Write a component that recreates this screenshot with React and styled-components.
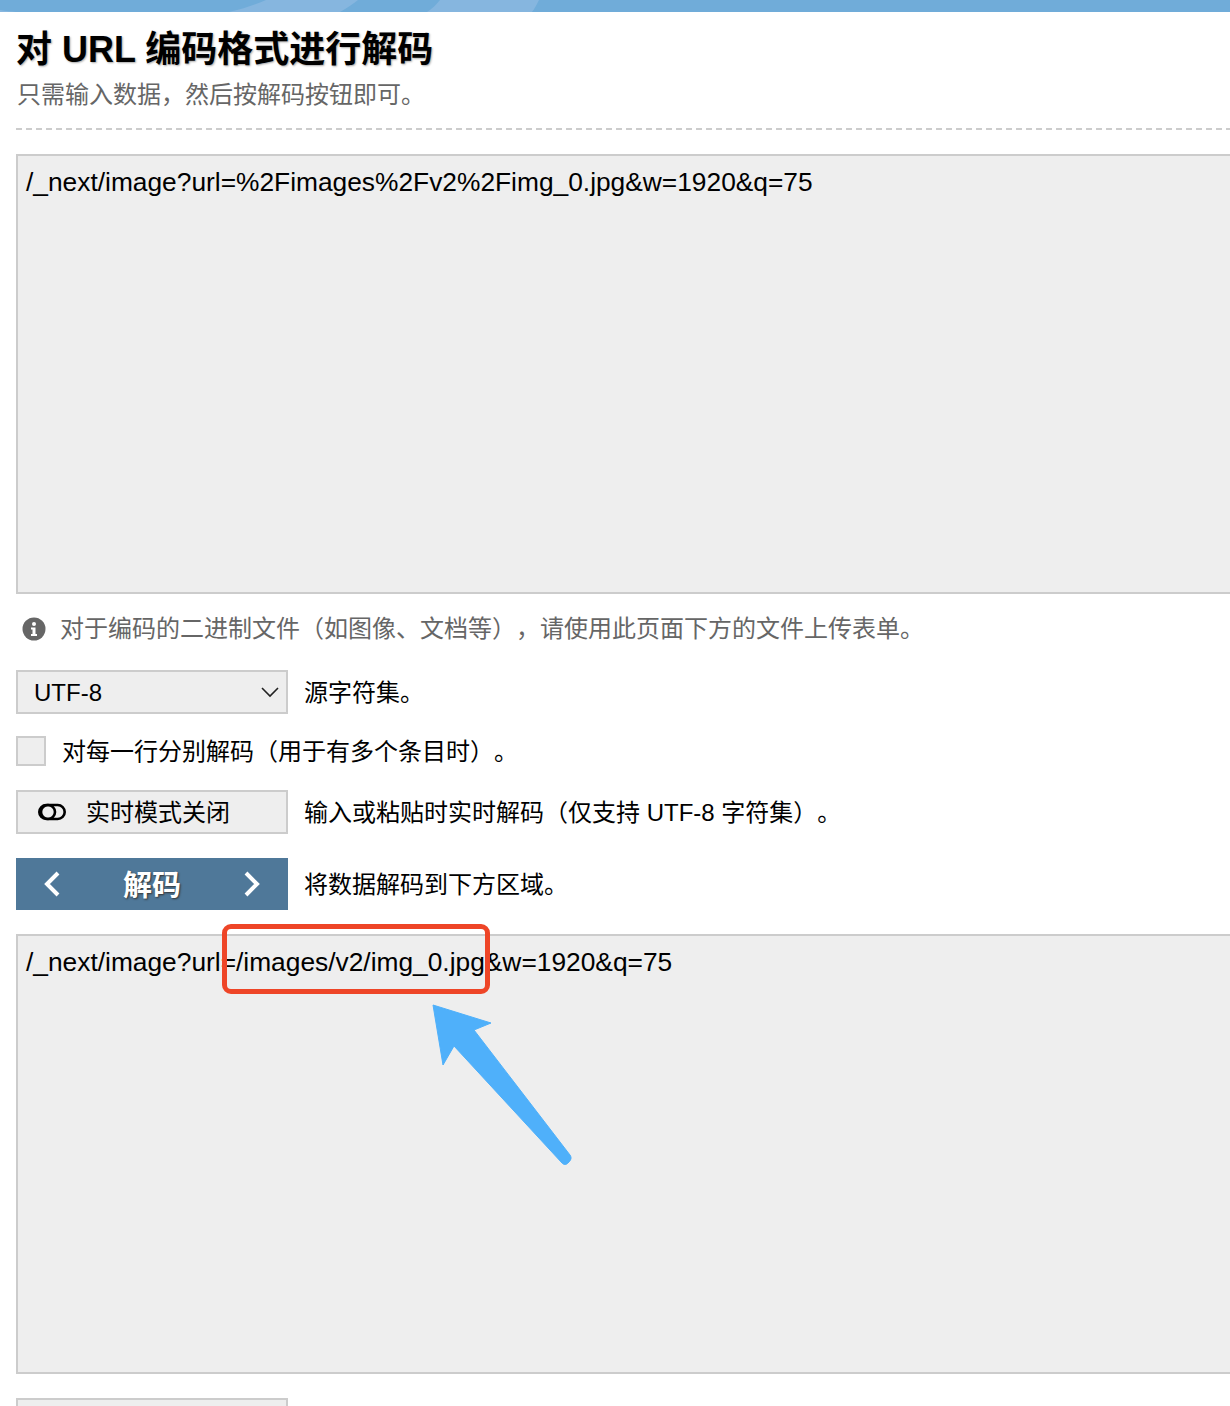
import React from 'react';
import styled, { createGlobalStyle } from 'styled-components';

const GlobalStyle = createGlobalStyle`
  html, body {
    margin: 0;
    padding: 0;
    background: #fff;
    overflow: hidden;
  }
  body {
    font-family: "Liberation Sans", "Noto Sans CJK SC", sans-serif;
    color: #000;
    text-spacing-trim: space-all;
  }
`;

const Page = styled.div`
  width: 1230px;
  height: 1406px;
  overflow: hidden;
`;

const TopBand = styled.div`
  height: 12px;
  background: #70acd9;
  overflow: hidden;
  svg {
    display: block;
  }
`;

const Content = styled.main`
  padding-left: 16px;
  width: 1300px;
`;

const Title = styled.h1`
  margin: 16px 0 0;
  font-size: 36px;
  line-height: 44px;
  font-weight: 700;
  text-shadow: 1px 1px 2px #aaa;
`;

const Subtitle = styled.p`
  margin: 7px 0 0 1px;
  font-size: 24px;
  line-height: 32px;
  color: #666;
`;

const Divider = styled.hr`
  height: 2px;
  margin: 17px 0 24px;
  border: 0;
  background: repeating-linear-gradient(to right, #ccc 0 6px, transparent 6px 10px);
`;

const Field = styled.div`
  position: relative;
  box-sizing: border-box;
  height: ${(p) => p.$height}px;
  border: 2px solid #ccc;
  background: #eee;
  padding: 11px 8px;
  font-size: 26.33px;
  line-height: 30px;
`;

const Note = styled.div`
  display: flex;
  align-items: center;
  gap: 14px;
  margin: 19px 0 25px 6px;
  font-size: 24px;
  line-height: 32px;
  color: #666;
`;

const Row = styled.div`
  display: flex;
  align-items: center;
  gap: 16px;
  margin-bottom: ${(p) => p.$gap}px;
  font-size: 24px;
  line-height: 32px;
`;

const Label = styled.span`
  padding-top: 2px;
  line-height: 30px;
`;

const Control = styled.div`
  box-sizing: border-box;
  width: 272px;
  height: 44px;
  flex: none;
  display: flex;
  align-items: center;
  justify-content: space-between;
  border: 2px solid #ccc;
  background: #eee;
  padding: 0 6px 0 16px;
  font-size: 24px;
`;

const ToggleControl = styled(Control)`
  justify-content: flex-start;
  gap: 20px;
  padding: 0 0 0 20px;
`;

const CheckBox = styled.div`
  box-sizing: border-box;
  width: 30px;
  height: 30px;
  flex: none;
  border: 2px solid #ccc;
  background: #eee;
`;

const DecodeButton = styled.div`
  box-sizing: border-box;
  width: 272px;
  height: 52px;
  flex: none;
  display: flex;
  align-items: center;
  justify-content: space-between;
  padding: 0 28px;
  background: #4f7899;
  color: #fff;
  font-size: 29px;
  font-weight: 700;
  text-shadow: 1px 1px 2px #333;
`;

const ButtonLabel = styled.span`
  padding-top: 3px;
`;

const Highlight = styled.div`
  position: absolute;
  left: 204px;
  top: -12px;
  width: 268px;
  height: 70px;
  box-sizing: border-box;
  border: 5px solid #ee4527;
  border-radius: 9px;
`;

const Arrow = styled.svg`
  position: absolute;
  left: 409px;
  top: 66px;
`;

const BottomControl = styled(Control)`
  margin-top: 24px;
`;

const App = () => (
  <Page>
    <GlobalStyle />
    <TopBand>
      <svg width="1230" height="12" viewBox="0 0 1230 12">
        <path d="M0 10C6 11 11 11.5 16 12H0Z" fill="#86b6df" />
        <path d="M266 0C254 5 242 9 229 12H340C347 8 353 4 358 0Z" fill="#86b6df" />
        <path d="M440 0C436 5 432 9 427 12H532C535 8 537 4 539 0Z" fill="#86b6df" />
      </svg>
    </TopBand>
    <Content>
      <Title>对 URL 编码格式进行解码</Title>
      <Subtitle>只需输入数据，然后按解码按钮即可。</Subtitle>
      <Divider />
      <Field $height={440}>/_next/image?url=%2Fimages%2Fv2%2Fimg_0.jpg&amp;w=1920&amp;q=75</Field>
      <Note>
        <svg width="24" height="24" viewBox="0 0 24 24">
          <circle cx="12" cy="12" r="11.5" fill="#666" />
          <circle cx="12" cy="7" r="2" fill="#fff" />
          <path d="M9 10.5h4.5V17H15v2H9v-2h1.5v-4.5H9z" fill="#fff" />
        </svg>
        对于编码的二进制文件（如图像、文档等），请使用此页面下方的文件上传表单。
      </Note>
      <Row $gap={21}>
        <Control>
          <Label>UTF-8</Label>
          <svg width="20" height="12" viewBox="0 0 20 12" fill="none" stroke="#222" strokeWidth="1.6">
            <path d="M2 2l8 8 8-8" />
          </svg>
        </Control>
        <Label>源字符集。</Label>
      </Row>
      <Row $gap={23}>
        <CheckBox />
        <Label>对每一行分别解码（用于有多个条目时）。</Label>
      </Row>
      <Row $gap={24}>
        <ToggleControl>
          <svg width="28" height="18" viewBox="0 0 28 18" fill="none" stroke="#000" strokeWidth="2.6">
            <rect x="1.3" y="2" width="25.4" height="14" rx="7" />
            <circle cx="10" cy="9" r="7" />
          </svg>
          <Label>实时模式关闭</Label>
        </ToggleControl>
        <Label>输入或粘贴时实时解码（仅支持 UTF-8 字符集）。</Label>
      </Row>
      <Row $gap={24}>
        <DecodeButton>
          <svg width="16" height="26" viewBox="0 0 16 26" fill="none" stroke="#fff" strokeWidth="4">
            <path d="M14 2L3 13l11 11" />
          </svg>
          <ButtonLabel>解码</ButtonLabel>
          <svg width="16" height="26" viewBox="0 0 16 26" fill="none" stroke="#fff" strokeWidth="4">
            <path d="M2 2l11 11L2 24" />
          </svg>
        </DecodeButton>
        <Label>将数据解码到下方区域。</Label>
      </Row>
      <Field $height={440}>
        /_next/image?url=/images/v2/img_0.jpg&amp;w=1920&amp;q=75
        <Highlight />
        <Arrow width="150" height="170" viewBox="0 0 150 170">
          <path
            d="M6 3L64 21 47 28 143 153C145 156 144 158 141 161 139 163 137 163 135 161L27 44 16 63Z"
            fill="#4fb0fa"
            stroke="#4fb0fa"
            strokeLinejoin="round"
          />
        </Arrow>
      </Field>
      <BottomControl />
    </Content>
  </Page>
);

export default App;
